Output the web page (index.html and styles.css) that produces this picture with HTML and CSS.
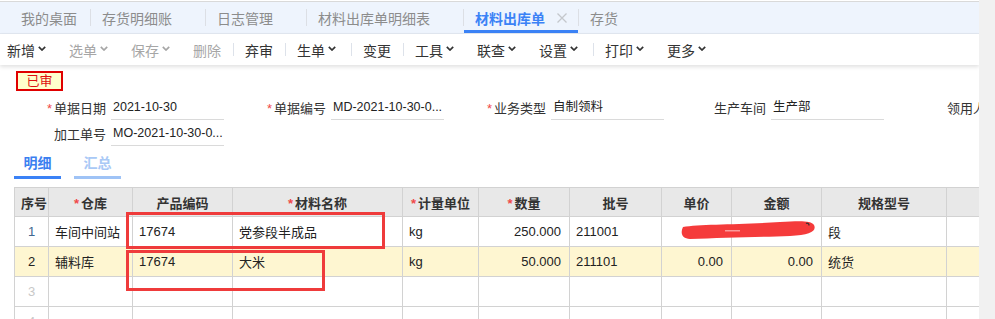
FILE: index.html
```html
<!DOCTYPE html>
<html lang="zh-CN">
<head>
<meta charset="utf-8">
<title>材料出库单</title>
<link rel="stylesheet" href="styles.css">
</head>
<body>
<div class="main">
  <div class="tabbar">
    <div class="tab tab-first">我的桌面</div>
    <span class="tsep"></span>
    <div class="tab">存货明细账<span class="slot"></span></div>
    <span class="tsep"></span>
    <div class="tab">日志管理<span class="slot"></span></div>
    <span class="tsep"></span>
    <div class="tab">材料出库单明细表<span class="slot"></span></div>
    <span class="tsep"></span>
    <div class="tab tab-active">材料出库单<span class="slot close"><svg width="10" height="10" viewBox="0 0 10 10"><path d="M0.5 0.5L9.5 9.5M9.5 0.5L0.5 9.5" stroke="#c4c7cc" stroke-width="1.3" fill="none"/></svg></span></div>
    <span class="tsep"></span>
    <div class="tab">存货<span class="slot"></span></div>
  </div>

  <div class="toolbar">
    <div class="tb-item dd first">新增<svg class="chev" width="8" height="5" viewBox="0 0 8 5"><path d="M0.8 0.8L4 4L7.2 0.8" stroke="currentColor" stroke-width="1.7" fill="none"/></svg></div>
    <div class="tb-item dd disabled">选单<svg class="chev" width="8" height="5" viewBox="0 0 8 5"><path d="M0.8 0.8L4 4L7.2 0.8" stroke="currentColor" stroke-width="1.7" fill="none"/></svg></div>
    <div class="tb-item dd disabled">保存<svg class="chev" width="8" height="5" viewBox="0 0 8 5"><path d="M0.8 0.8L4 4L7.2 0.8" stroke="currentColor" stroke-width="1.7" fill="none"/></svg></div>
    <div class="tb-item disabled">删除</div>
    <span class="tb-sep"></span>
    <div class="tb-item">弃审</div>
    <span class="tb-sep"></span>
    <div class="tb-item dd">生单<svg class="chev" width="8" height="5" viewBox="0 0 8 5"><path d="M0.8 0.8L4 4L7.2 0.8" stroke="currentColor" stroke-width="1.7" fill="none"/></svg></div>
    <span class="tb-sep after-dd"></span>
    <div class="tb-item">变更</div>
    <span class="tb-sep"></span>
    <div class="tb-item dd">工具<svg class="chev" width="8" height="5" viewBox="0 0 8 5"><path d="M0.8 0.8L4 4L7.2 0.8" stroke="currentColor" stroke-width="1.7" fill="none"/></svg></div>
    <div class="tb-item dd">联查<svg class="chev" width="8" height="5" viewBox="0 0 8 5"><path d="M0.8 0.8L4 4L7.2 0.8" stroke="currentColor" stroke-width="1.7" fill="none"/></svg></div>
    <div class="tb-item dd">设置<svg class="chev" width="8" height="5" viewBox="0 0 8 5"><path d="M0.8 0.8L4 4L7.2 0.8" stroke="currentColor" stroke-width="1.7" fill="none"/></svg></div>
    <span class="tb-sep after-dd"></span>
    <div class="tb-item dd">打印<svg class="chev" width="8" height="5" viewBox="0 0 8 5"><path d="M0.8 0.8L4 4L7.2 0.8" stroke="currentColor" stroke-width="1.7" fill="none"/></svg></div>
    <div class="tb-item dd">更多<svg class="chev" width="8" height="5" viewBox="0 0 8 5"><path d="M0.8 0.8L4 4L7.2 0.8" stroke="currentColor" stroke-width="1.7" fill="none"/></svg></div>
  </div>

  <div class="content">
    <div class="status">已审</div>

    <div class="form">
      <div class="form-row">
        <div class="field"><div class="label"><span class="req">*</span>单据日期</div><div class="value">2021-10-30</div></div>
        <div class="field"><div class="label"><span class="req">*</span>单据编号</div><div class="value">MD-2021-10-30-0...</div></div>
        <div class="field"><div class="label"><span class="req">*</span>业务类型</div><div class="value">自制领料</div></div>
        <div class="field"><div class="label">生产车间</div><div class="value">生产部</div></div>
        <div class="field"><div class="label">领用人</div><div class="value"></div></div>
      </div>
      <div class="form-row">
        <div class="field"><div class="label">加工单号</div><div class="value">MO-2021-10-30-0...</div></div>
      </div>
    </div>

    <div class="subtabs">
      <div class="subtab active">明细</div>
      <div class="subtab">汇总</div>
    </div>

    <div class="grid-wrap">
      <table class="grid">
        <colgroup>
          <col class="c-no"><col class="c-wh"><col class="c-code"><col class="c-name"><col class="c-unit"><col class="c-qty"><col class="c-lot"><col class="c-price"><col class="c-amt"><col class="c-spec"><col class="c-stock">
        </colgroup>
        <thead>
          <tr>
            <th>序号</th>
            <th><span class="req">*</span>仓库</th>
            <th>产品编码</th>
            <th><span class="req">*</span>材料名称</th>
            <th><span class="req">*</span>计量单位</th>
            <th><span class="req">*</span>数量</th>
            <th>批号</th>
            <th>单价</th>
            <th>金额</th>
            <th>规格型号</th>
            <th>现存量</th>
          </tr>
        </thead>
        <tbody>
          <tr>
            <td class="no cur">1</td><td>车间中间站</td><td>17674</td><td>党参段半成品</td><td>kg</td><td class="num">250.000</td><td>211001</td><td class="num"></td><td class="num"></td><td>段</td><td></td>
          </tr>
          <tr class="sel">
            <td class="no">2</td><td>辅料库</td><td>17674</td><td>大米</td><td>kg</td><td class="num">50.000</td><td>211101</td><td class="num">0.00</td><td class="num">0.00</td><td>统货</td><td></td>
          </tr>
          <tr>
            <td class="no empty">3</td><td></td><td></td><td></td><td></td><td></td><td></td><td></td><td></td><td></td><td></td>
          </tr>
          <tr>
            <td class="no empty">4</td><td></td><td></td><td></td><td></td><td></td><td></td><td></td><td></td><td></td><td></td>
          </tr>
        </tbody>
      </table>

      <div class="mark mark-a"></div>
      <div class="mark mark-b"></div>
      <svg class="scribble" width="138" height="22" viewBox="0 0 138 22">
        <path d="M3 8 C 20 5, 60 6, 100 3 C 118 2, 131 1, 134 6 C 137 12, 130 16, 110 17 C 80 18, 40 19, 10 20 C 2 20, 0 14, 3 8 Z" fill="#f53b3b"/>
        <rect x="45" y="11" width="15" height="1.5" fill="#fb9a9a"/>
        <path d="M126 4.5 a2 2 0 0 1 3 2" stroke="#333" stroke-width="1.3" fill="none"/>
      </svg>
    </div>
  </div>
</div>
<div class="scrollbar"></div>
</body>
</html>
```

FILE: styles.css
```css
* { box-sizing: border-box; }

html, body {
  margin: 0;
  padding: 0;
}

body {
  width: 995px;
  height: 319px;
  overflow: hidden;
  display: flex;
  background: #fff;
  color: #333;
  font-family: "Liberation Sans", "Noto Sans CJK SC", sans-serif;
}

.main {
  width: 979px;
  height: 318px;
  margin-top: 1px;
  border-top: 1px solid #d9d9d9;
  overflow: hidden;
  flex-shrink: 0;
}

.scrollbar {
  width: 16px;
  background: #f1f1f1;
}

/* top tab bar */
.tabbar {
  height: 32px;
  background: #eef4fd;
  border-bottom: 1px solid #e2e8f1;
  display: flex;
  align-items: stretch;
  padding-left: 10px;
}

.tab {
  display: flex;
  align-items: center;
  padding: 0 11px;
  font-size: 14px;
  color: #8c8c8c;
  white-space: nowrap;
}

.tab-first { padding-right: 13px; }

.tab .slot {
  width: 22px;
  display: flex;
  align-items: center;
  justify-content: flex-end;
}

.tab-active {
  color: #3b82f6;
  font-weight: bold;
  box-shadow: inset 0 -3px 0 #3b82f6;
}

.tsep {
  width: 1px;
  height: 17px;
  align-self: center;
  background: #dcdfe5;
}

/* toolbar */
.toolbar {
  height: 31px;
  display: flex;
  align-items: center;
  padding-left: 7px;
  background: #fff;
  box-shadow: 0 2px 4px rgba(0, 0, 0, 0.12);
  position: relative;
  z-index: 1;
}

.tb-item {
  display: flex;
  align-items: center;
  padding: 0 12px;
  font-size: 14px;
  color: #333;
  white-space: nowrap;
}

.tb-item.first { padding-left: 0; }
.tb-item.dd { padding-right: 11px; }
.tb-item.disabled { color: #a6a6a6; }

.chev {
  margin-left: 3px;
  margin-top: -2px;
}

.tb-sep {
  width: 1px;
  height: 13px;
  background: #dde2ea;
  margin-right: -1px;
}

.tb-sep.after-dd { margin-left: 4px; }

/* content */
.content {
  padding-top: 6px;
}

.status {
  width: 47px;
  height: 20px;
  margin-left: 16px;
  border: 2px solid #e00000;
  background: #ffffcc;
  color: #dd1111;
  font-size: 13px;
  line-height: 16px;
  text-align: center;
}

.form {
  margin-top: 3px;
  padding-left: 4px;
}

.form-row {
  display: flex;
}

.field {
  width: 220px;
  flex-shrink: 0;
  display: flex;
  align-items: center;
}

.label {
  width: 102px;
  text-align: right;
  font-size: 13px;
  color: #333;
  white-space: nowrap;
}

.req {
  color: #f04848;
  margin-right: 2px;
}

.value {
  margin-left: 5px;
  width: 113px;
  height: 26px;
  line-height: 26px;
  border-bottom: 1px solid #dadada;
  padding-left: 2px;
  font-size: 12.5px;
  color: #222;
  white-space: nowrap;
  overflow: hidden;
}

/* sub tabs */
.subtabs {
  display: flex;
  gap: 13px;
  margin: 5px 0 0 14px;
}

.subtab {
  width: 47px;
  height: 28px;
  line-height: 25px;
  text-align: center;
  font-size: 14px;
  font-weight: bold;
  color: #a9c9f6;
  border-bottom: 3px solid #9fc3f6;
}

.subtab.active {
  color: #3b7ff0;
  border-bottom-color: #3b82f6;
}

/* grid */
.grid-wrap {
  position: relative;
  margin: 8px 0 0 14px;
}

.grid {
  border-collapse: collapse;
  table-layout: fixed;
  width: 1032px;
  font-size: 13px;
}

.c-no { width: 34px; }
.c-wh { width: 84px; }
.c-code { width: 100px; }
.c-name { width: 170px; }
.c-unit { width: 76px; }
.c-qty { width: 91px; }
.c-lot { width: 92px; }
.c-price { width: 70px; }
.c-amt { width: 90px; }
.c-spec { width: 125px; }
.c-stock { width: 110px; }

.grid th,
.grid td {
  border: 1px solid #d2d2d2;
  padding: 0 6px;
  white-space: nowrap;
  overflow: hidden;
}

.grid th {
  height: 29px;
  background: #e8e8e8;
  font-weight: bold;
  text-align: center;
  color: #333;
}

.grid td {
  height: 30px;
  color: #222;
}

.grid td.num {
  text-align: right;
  padding-right: 8px;
}

.grid td.no {
  text-align: center;
  padding: 0;
}

.grid td.cur { color: #41678f; }
.grid td.empty { color: #c8c8c8; }

.grid tr.sel td { background: #fef6d1; }

.mark {
  position: absolute;
  border: 3px solid #ef3b3b;
}

.mark-a {
  left: 112px;
  top: 25px;
  width: 259px;
  height: 37px;
}

.mark-b {
  left: 112px;
  top: 63px;
  width: 199px;
  height: 41px;
}

.scribble {
  position: absolute;
  left: 666px;
  top: 32px;
}
```
